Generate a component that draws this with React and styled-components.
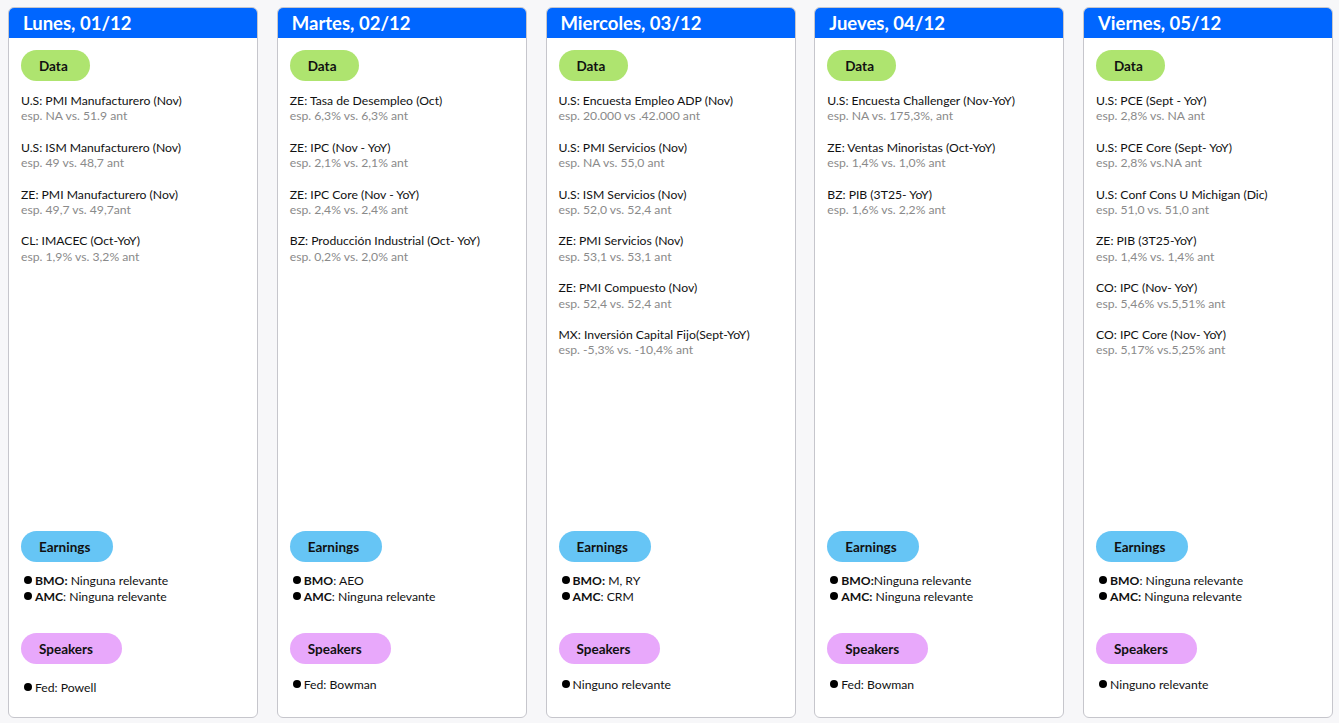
import React from "react";
import styled, { createGlobalStyle } from "styled-components";

const GlobalStyle = createGlobalStyle`
  body {
    margin: 0;
    background: #f7f7f9;
    font-family: Lato, "Liberation Sans", sans-serif;
  }
`;

const Board = styled.div`
  display: flex;
  gap: 18.75px;
  padding: 7px 6px 5px 8px;
  height: 723px;
  box-sizing: border-box;
`;

const Card = styled.div`
  width: 250px;
  flex-shrink: 0;
  box-sizing: border-box;
  background: #ffffff;
  border: 1px solid #c6c6cc;
  border-radius: 6px;
  display: flex;
  flex-direction: column;
  overflow: hidden;
`;

const Header = styled.div`
  height: 31px;
  margin: -1px -1px 0;
  background: #0066ff;
  border-radius: 6px 6px 0 0;
  color: #ffffff;
  font-weight: 700;
  font-size: 18.5px;
  display: flex;
  align-items: center;
  padding-left: 15px;
`;

const Body = styled.div`
  flex: 1;
  display: flex;
  flex-direction: column;
  padding: 12px 12px ${(p) => p.$bottom}px 12px;
`;

const Pill = styled.div`
  width: ${(p) => p.$w}px;
  height: 31px;
  box-sizing: border-box;
  padding-left: 18px;
  border-radius: 16px;
  background: ${(p) => p.$bg};
  display: flex;
  align-items: center;
  font-weight: 700;
  font-size: 13.5px;
  color: #111;
`;

const DataList = styled.div`
  flex: 1;
  display: flex;
  flex-direction: column;
  gap: 16px;
  margin-top: 12px;
`;

const Item = styled.div`
  font-size: 12.2px;
  line-height: 15.4px;
`;

const Title = styled.div`
  color: #111;
`;

const Sub = styled.div`
  color: #8a8a8a;
`;

const Lines = styled.div`
  margin-top: ${(p) => p.$top}px;
  margin-bottom: ${(p) => p.$bottom || 0}px;
  font-size: 12.2px;
  line-height: 16px;
  color: #111;
`;

const Line = styled.div`
  display: flex;
  align-items: center;
  gap: 3px;
  margin-left: 3px;
  b {
    font-weight: 700;
  }
`;

const Dot = styled.span`
  width: 8px;
  height: 8px;
  border-radius: 50%;
  background: #000;
  flex-shrink: 0;
  margin-top: -3px;
`;

const days = [
  {
    title: "Lunes, 01/12",
    data: [
      ["U.S: PMI Manufacturero (Nov)", "esp. NA vs. 51.9  ant"],
      ["U.S: ISM Manufacturero (Nov)", "esp. 49 vs. 48,7 ant"],
      ["ZE: PMI Manufacturero (Nov)", "esp. 49,7 vs. 49,7ant"],
      ["CL: IMACEC (Oct-YoY)", "esp. 1,9% vs. 3,2% ant"],
    ],
    earnings: [
      ["BMO:", " Ninguna relevante"],
      ["AMC", ": Ninguna relevante"],
    ],
    speaker: "Fed: Powell",
    speakerTop: 16,
    bottom: 21,
  },
  {
    title: "Martes, 02/12",
    data: [
      ["ZE: Tasa de Desempleo (Oct)", "esp. 6,3% vs. 6,3% ant"],
      ["ZE: IPC (Nov - YoY)", "esp. 2,1% vs. 2,1% ant"],
      ["ZE: IPC Core (Nov - YoY)", "esp. 2,4% vs. 2,4% ant"],
      ["BZ: Producción Industrial (Oct- YoY)", "esp. 0,2% vs. 2,0% ant"],
    ],
    earnings: [
      ["BMO", ": AEO"],
      ["AMC", ": Ninguna relevante"],
    ],
    speaker: "Fed: Bowman",
    speakerTop: 13,
    bottom: 24,
  },
  {
    title: "Miercoles, 03/12",
    data: [
      ["U.S: Encuesta Empleo ADP (Nov)", "esp.  20.000 vs .42.000 ant"],
      ["U.S: PMI Servicios (Nov)", "esp. NA vs. 55,0  ant"],
      ["U.S: ISM Servicios (Nov)", "esp. 52,0 vs. 52,4  ant"],
      ["ZE: PMI Servicios (Nov)", "esp. 53,1 vs. 53,1 ant"],
      ["ZE: PMI Compuesto (Nov)", "esp. 52,4 vs. 52,4 ant"],
      ["MX: Inversión Capital Fijo(Sept-YoY)", "esp. -5,3% vs. -10,4% ant"],
    ],
    earnings: [
      ["BMO:", " M, RY"],
      ["AMC", ": CRM"],
    ],
    speaker: "Ninguno relevante",
    speakerTop: 13,
    bottom: 24,
  },
  {
    title: "Jueves, 04/12",
    data: [
      ["U.S: Encuesta Challenger (Nov-YoY)", "esp. NA vs. 175,3%, ant"],
      ["ZE: Ventas Minoristas (Oct-YoY)", "esp. 1,4% vs. 1,0% ant"],
      ["BZ: PIB (3T25- YoY)", "esp. 1,6% vs. 2,2% ant"],
    ],
    earnings: [
      ["BMO:", "Ninguna relevante"],
      ["AMC:", " Ninguna relevante"],
    ],
    speaker: "Fed: Bowman",
    speakerTop: 13,
    bottom: 24,
  },
  {
    title: "Viernes, 05/12",
    data: [
      ["U.S: PCE (Sept - YoY)", "esp. 2,8% vs. NA ant"],
      ["U.S: PCE  Core (Sept- YoY)", "esp. 2,8% vs.NA ant"],
      ["U.S: Conf Cons U Michigan (Dic)", "esp. 51,0 vs. 51,0 ant"],
      ["ZE: PIB (3T25-YoY)", "esp. 1,4% vs. 1,4% ant"],
      ["CO: IPC (Nov- YoY)", "esp. 5,46% vs.5,51% ant"],
      ["CO: IPC Core (Nov- YoY)", "esp. 5,17% vs.5,25% ant"],
    ],
    earnings: [
      ["BMO", ": Ninguna relevante"],
      ["AMC:", " Ninguna relevante"],
    ],
    speaker: "Ninguno relevante",
    speakerTop: 13,
    bottom: 24,
  },
];

const DayCard = ({ day }) => (
  <Card>
    <Header>{day.title}</Header>
    <Body $bottom={day.bottom}>
      <Pill $bg="#aee46f" $w={69}>Data</Pill>
      <DataList>
        {day.data.map(([t, s]) => (
          <Item key={t}>
            <Title>{t}</Title>
            <Sub>{s}</Sub>
          </Item>
        ))}
      </DataList>
      <Pill $bg="#66c5f5" $w={92}>Earnings</Pill>
      <Lines $top={11} $bottom={28}>
        {day.earnings.map(([k, v]) => (
          <Line key={k}>
            <Dot />
            <span>
              <b>{k}</b>
              {v}
            </span>
          </Line>
        ))}
      </Lines>
      <Pill $bg="#e8a8fb" $w={101}>Speakers</Pill>
      <Lines $top={day.speakerTop}>
        <Line>
          <Dot />
          <span>{day.speaker}</span>
        </Line>
      </Lines>
    </Body>
  </Card>
);

export default function App() {
  return (
    <>
      <GlobalStyle />
      <Board>
        {days.map((d) => (
          <DayCard key={d.title} day={d} />
        ))}
      </Board>
    </>
  );
}
